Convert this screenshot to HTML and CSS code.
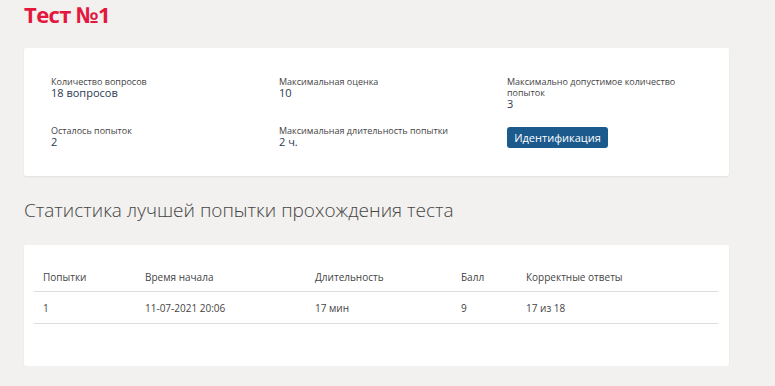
FILE: index.html
```html
<!DOCTYPE html>
<html lang="ru">
<head>
    <meta charset="UTF-8">
    <meta name="viewport" content="width=device-width, initial-scale=1.0">
    <title>Тест №1</title>
    <link rel="stylesheet" href="styles.css">
</head>
<body>
    <div class="page">
        <h1 class="title">Тест №1</h1>

        <div class="card info">
            <div class="field">
                <div class="label">Количество вопросов</div>
                <div class="value">18 вопросов</div>
            </div>
            <div class="field">
                <div class="label">Максимальная оценка</div>
                <div class="value">10</div>
            </div>
            <div class="field">
                <div class="label">Максимально допустимое количество попыток</div>
                <div class="value">3</div>
            </div>
            <div class="field">
                <div class="label">Осталось попыток</div>
                <div class="value">2</div>
            </div>
            <div class="field">
                <div class="label">Максимальная длительность попытки</div>
                <div class="value">2 ч.</div>
            </div>
            <div class="field">
                <button class="btn">Идентификация</button>
            </div>
        </div>

        <h2 class="subtitle">Статистика лучшей попытки прохождения теста</h2>

        <div class="card stats">
            <table>
                <thead>
                    <tr>
                        <th class="c1">Попытки</th>
                        <th class="c2">Время начала</th>
                        <th class="c3">Длительность</th>
                        <th class="c4">Балл</th>
                        <th>Корректные ответы</th>
                    </tr>
                </thead>
                <tbody>
                    <tr>
                        <td>1</td>
                        <td>11-07-2021 20:06</td>
                        <td>17 мин</td>
                        <td>9</td>
                        <td>17 из 18</td>
                    </tr>
                </tbody>
            </table>
        </div>
    </div>
</body>
</html>
```

FILE: styles.css
```css
body{
    margin: 0;
    background-color: #f2f1ef;
    font-family: "Open Sans", Arial, sans-serif;
    color: #444;
}
.page{
    width: 705px;
    padding: 0 24px;
}
.title{
    margin: 0;
    padding-top: 1px;
    height: 47px;
    font-size: 22px;
    line-height: 26px;
    font-weight: 700;
    letter-spacing: -0.6px;
    color: #e2183f;
}
.card{
    background: #fff;
    border-radius: 2px;
    box-shadow: 0 1px 2px rgba(0,0,0,0.07);
}
.info{
    display: grid;
    grid-template-columns: 228px 228px 228px;
    row-gap: 15px;
    padding: 28px 21px 28px 27px;
}
.label{
    font-size: 9px;
    line-height: 11px;
    color: #444;
    padding-right: 50px;
}
.value{
    font-size: 11px;
    line-height: 12px;
    color: #2a3a55;
}
.btn{
    width: 101px;
    height: 21px;
    margin-top: 1px;
    padding: 0;
    border: none;
    border-radius: 3px;
    background: #1b5a8c;
    color: #fff;
    font-family: "Open Sans", Arial, sans-serif;
    font-size: 11px;
}
.subtitle{
    margin: 0;
    padding: 22px 0 23px;
    font-size: 19px;
    line-height: 24px;
    font-weight: 300;
    color: #444;
}
.stats{
    padding: 17px 11px 42px 10px;
}
table{
    width: 100%;
    border-collapse: collapse;
    font-size: 10px;
    line-height: 14px;
    color: #444;
}
th{
    text-align: left;
    font-weight: 400;
    padding: 8px 9px 7px;
    border-bottom: 1px solid #ddd;
}
td{
    padding: 9px 9px 8px;
    border-bottom: 1px solid #ddd;
}
.c1{ width: 84px; }
.c2{ width: 152px; }
.c3{ width: 128px; }
.c4{ width: 47px; }
```
